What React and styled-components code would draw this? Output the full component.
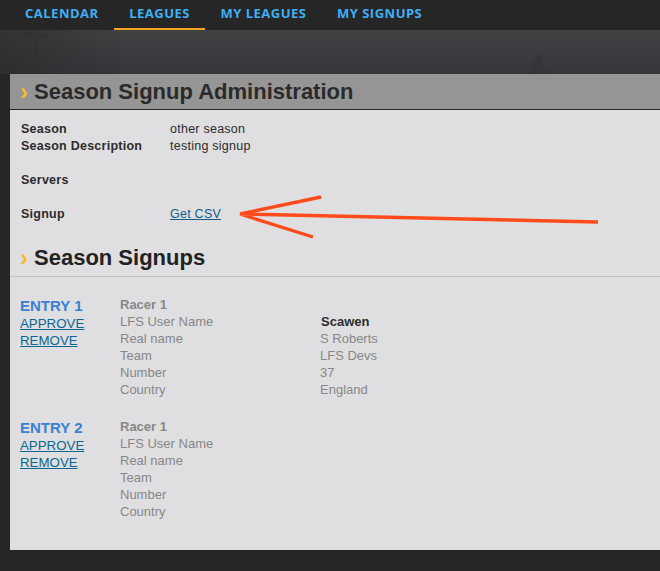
import React from 'react';
import styled, { createGlobalStyle } from 'styled-components';

const GlobalStyle = createGlobalStyle`
  html, body {
    margin: 0;
    padding: 0;
    background: #262626;
    font-family: 'Liberation Sans', Arial, sans-serif;
  }
`;

const navItems = [
  { label: 'CALENDAR' },
  { label: 'LEAGUES', active: true },
  { label: 'MY LEAGUES' },
  { label: 'MY SIGNUPS' },
];

const seasonRows = [
  { label: 'Season', value: 'other season' },
  { label: 'Season Description', value: 'testing signup' },
];

const entries = [
  {
    id: 1,
    user: 'Scawen',
    real: 'S Roberts',
    team: 'LFS Devs',
    number: '37',
    country: 'England',
  },
  { id: 2 },
];

function Entry({ entry }) {
  const rows = [
    ['LFS User Name', entry.user],
    ['Real name', entry.real],
    ['Team', entry.team],
    ['Number', entry.number],
    ['Country', entry.country],
  ];

  return (
    <EntryRow>
      <EntryActions>
        <EntryTitle>ENTRY {entry.id}</EntryTitle>
        <ActionLink href="#">APPROVE</ActionLink>
        <ActionLink href="#">REMOVE</ActionLink>
      </EntryActions>
      <RacerGrid>
        <RacerTitle>Racer 1</RacerTitle>
        {rows.map(([label, value], i) => (
          <React.Fragment key={label}>
            <span>{label}</span>
            <RacerValue $strong={i === 0}>{value}</RacerValue>
          </React.Fragment>
        ))}
      </RacerGrid>
    </EntryRow>
  );
}

export default function App() {
  return (
    <Page>
      <GlobalStyle />
      <Nav>
        {navItems.map((item) => (
          <NavLink key={item.label} $active={item.active}>
            {item.label}
          </NavLink>
        ))}
      </Nav>
      <Backdrop>
        <Scenery viewBox="0 0 660 44" aria-hidden="true">
          <path d="M36 6 V44" stroke="#2b2b2c" strokeWidth="1.5" fill="none" />
          <path d="M20 4 L47 5" stroke="#2a2a2b" strokeWidth="4" fill="none" />
          <path d="M538 26 L533 44 M539 26 L544 44" stroke="#2c2d30" strokeWidth="3" fill="none" />
        </Scenery>
        <Panel>
          <PanelHeader>
            <Chevron>›</Chevron>
            <HeaderTitle>Season Signup Administration</HeaderTitle>
          </PanelHeader>
          <InfoBlock>
            {seasonRows.map((row) => (
              <InfoRow key={row.label}>
                <InfoLabel>{row.label}</InfoLabel>
                <span>{row.value}</span>
              </InfoRow>
            ))}
            <InfoRow $gap>
              <InfoLabel>Servers</InfoLabel>
            </InfoRow>
            <InfoRow $gap>
              <InfoLabel>Signup</InfoLabel>
              <CsvLink href="#">Get CSV</CsvLink>
            </InfoRow>
          </InfoBlock>
          <SectionHeader>
            <Chevron>›</Chevron>
            <SectionTitle>Season Signups</SectionTitle>
          </SectionHeader>
          <EntryList>
            {entries.map((entry) => (
              <Entry key={entry.id} entry={entry} />
            ))}
          </EntryList>
          <Arrow viewBox="0 0 370 50" aria-hidden="true">
            <path
              d="M1 19 L359 27 M1 19 L82 2 M1 19 L74 42"
              fill="none"
              stroke="#ff4a1c"
              strokeWidth="3.4"
              strokeLinejoin="round"
            />
          </Arrow>
        </Panel>
      </Backdrop>
    </Page>
  );
}

const Page = styled.div`
  width: 660px;
  height: 571px;
  overflow: hidden;
  background: #262626;
`;

const Nav = styled.nav`
  display: flex;
  height: 30px;
  padding-left: 10px;
  box-sizing: border-box;
  background: #262626;
`;

const NavLink = styled.a`
  display: block;
  height: 30px;
  box-sizing: border-box;
  padding: 6px 15.5px 0 15px;
  font-family: 'Open Sans', sans-serif;
  font-size: 13px;
  font-weight: 700;
  line-height: 15px;
  letter-spacing: 0.5px;
  color: #3fb0f4;
  border-bottom: 2px solid ${(p) => (p.$active ? '#f5a51f' : 'transparent')};
`;

const Backdrop = styled.div`
  position: relative;
  height: 520px;
  padding-top: 44px;
  box-sizing: border-box;
  background:
    linear-gradient(90deg, rgba(38, 38, 38, 0.55) 0, rgba(38, 38, 38, 0) 130px) 0 0 / 100% 44px no-repeat,
    linear-gradient(180deg, #414244 0, #35363b 44px, #262626 44px) 0 0 / 100% 100% no-repeat;
`;

const Scenery = styled.svg`
  position: absolute;
  left: 0;
  top: 0;
  width: 660px;
  height: 44px;
  opacity: 0.35;
  filter: blur(1px);
`;

const Panel = styled.section`
  position: relative;
  margin-left: 10px;
  height: 476px;
  background: #dfdfe1;
`;

const PanelHeader = styled.header`
  display: flex;
  align-items: center;
  height: 36px;
  box-sizing: border-box;
  padding-left: 10px;
  background: #959595;
  border-bottom: 1px solid #262626;
`;

const Chevron = styled.span`
  width: 14px;
  font-size: 24px;
  font-weight: 700;
  line-height: 24px;
  color: #f8b92e;
`;

const HeaderTitle = styled.h1`
  margin: 0;
  font-size: 22px;
  font-weight: 700;
  color: #2a2a2a;
`;

const InfoBlock = styled.div`
  padding: 11px 0 0 11px;
  font-size: 12.5px;
  line-height: 17px;
  letter-spacing: 0.25px;
  color: #2c2c2c;
`;

const InfoRow = styled.div`
  display: grid;
  grid-template-columns: 149px 1fr;
  height: 17px;
  margin-top: ${(p) => (p.$gap ? '17px' : '0')};
`;

const InfoLabel = styled.span`
  font-weight: 700;
`;

const CsvLink = styled.a`
  color: #0f5d88;
  text-decoration: underline;
`;

const SectionHeader = styled.div`
  display: flex;
  align-items: center;
  height: 36px;
  margin-top: 17px;
  padding-left: 10px;
  border-bottom: 1px solid #c2c2c2;
`;

const SectionTitle = styled.h2`
  margin: 0;
  font-size: 22px;
  font-weight: 700;
  color: #222222;
`;

const EntryList = styled.div`
  padding: 19px 0 0 10px;
`;

const EntryRow = styled.article`
  display: flex;
  margin-bottom: 20px;
`;

const EntryActions = styled.div`
  display: flex;
  flex-direction: column;
  align-items: flex-start;
  width: 100px;
`;

const EntryTitle = styled.div`
  margin: 1px 0;
  font-size: 15px;
  font-weight: 700;
  line-height: 17px;
  color: #3a81d2;
`;

const ActionLink = styled.a`
  font-size: 13.3px;
  line-height: 17px;
  color: #0b678f;
  text-decoration: underline;
`;

const RacerGrid = styled.div`
  display: grid;
  grid-template-columns: 200px 1fr;
  grid-auto-rows: 17px;
  font-size: 13px;
  line-height: 17px;
  color: #878787;
`;

const RacerTitle = styled.div`
  grid-column: 1 / -1;
  font-weight: 700;
`;

const RacerValue = styled.span`
  font-weight: ${(p) => (p.$strong ? 700 : 400)};
  color: ${(p) => (p.$strong ? '#2c2c2c' : '#878787')};
  padding-left: ${(p) => (p.$strong ? '1px' : '0')};
`;

const Arrow = styled.svg`
  position: absolute;
  left: 229px;
  top: 121px;
  width: 370px;
  height: 50px;
`;
